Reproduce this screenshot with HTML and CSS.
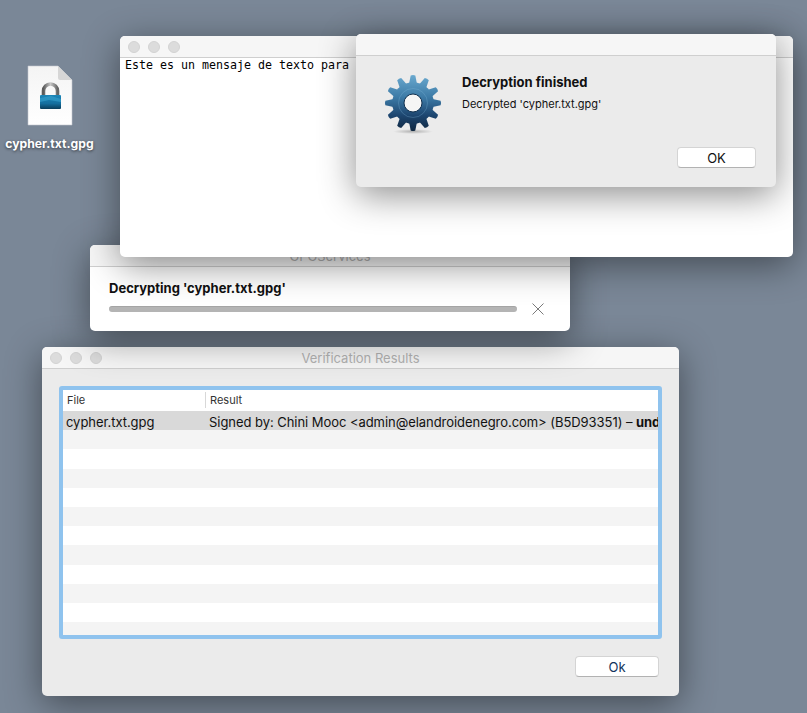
FILE: index.html
```html
<!DOCTYPE html>
<html lang="es">
<head>
    <meta charset="UTF-8">
    <title>Verification Results</title>
    <link rel="stylesheet" href="styles.css">
</head>
<body>
    <div class="desktop">
        <div class="file-icon">
            <svg class="doc" width="60" height="64" viewBox="0 0 60 64">
                <defs>
                    <linearGradient id="lockBody" x1="0" y1="0" x2="0" y2="1">
                        <stop offset="0" stop-color="#1c86b8"/>
                        <stop offset="0.6" stop-color="#146f9f"/>
                        <stop offset="1" stop-color="#0a3c5a"/>
                    </linearGradient>
                    <linearGradient id="shackle" x1="0" y1="0" x2="1" y2="0">
                        <stop offset="0" stop-color="#5c5c5c"/>
                        <stop offset="0.5" stop-color="#c8c8c8"/>
                        <stop offset="1" stop-color="#666"/>
                    </linearGradient>
                    <linearGradient id="docFill" x1="0" y1="0" x2="0" y2="1">
                        <stop offset="0" stop-color="#f4f4f4"/>
                        <stop offset="1" stop-color="#fff"/>
                    </linearGradient>
                </defs>
                <path d="M8 1H38L52 15V60H8Z" fill="url(#docFill)" stroke="#c4c8cd" stroke-width="0.6"/>
                <path d="M38 1L52 15H40Q38 15 38 13Z" fill="#d6d6d6"/>
                <path d="M23.5 31V26A7 7 0 0 1 37.5 26V31" fill="none" stroke="url(#shackle)" stroke-width="3.6"/>
                <rect x="20" y="30" width="21" height="14" rx="1" fill="url(#lockBody)"/>
                <path d="M20 33L31 31L41 34V37L29 35L20 37Z" fill="#3ba6d2" opacity="0.55"/>
            </svg>
            <span class="file-name">cypher.txt.gpg</span>
        </div>

        <div class="window text-window">
            <div class="titlebar">
                <span class="dot"></span><span class="dot"></span><span class="dot"></span>
            </div>
            <div class="text-body">Este es un mensaje de texto para</div>
        </div>

        <div class="window alert-window">
            <div class="titlebar"></div>
            <div class="alert-body">
                <svg class="gear" width="60" height="62" viewBox="-30 -30 60 62">
                    <defs>
                        <linearGradient id="gearFill" gradientUnits="userSpaceOnUse" x1="0" y1="-28" x2="0" y2="28">
                            <stop offset="0" stop-color="#6aa9cf"/>
                            <stop offset="0.4" stop-color="#3c7aa6"/>
                            <stop offset="0.72" stop-color="#1d4670"/>
                            <stop offset="1" stop-color="#0f2740"/>
                        </linearGradient>
                        <radialGradient id="gearShadow">
                            <stop offset="0" stop-color="#000" stop-opacity="0.25"/>
                            <stop offset="1" stop-color="#000" stop-opacity="0"/>
                        </radialGradient>
                        <path id="tooth" d="M-3.9 -19.5L-2.3 -27.6Q0 -28.6 2.3 -27.6L3.9 -19.5Z"/>
                        <mask id="gearMask" maskUnits="userSpaceOnUse" x="-30" y="-30" width="60" height="60">
                            <circle r="20.8" fill="#fff"/>
                            <g fill="#fff">
                                <use href="#tooth"/>
                                <use href="#tooth" transform="rotate(30)"/>
                                <use href="#tooth" transform="rotate(60)"/>
                                <use href="#tooth" transform="rotate(90)"/>
                                <use href="#tooth" transform="rotate(120)"/>
                                <use href="#tooth" transform="rotate(150)"/>
                                <use href="#tooth" transform="rotate(180)"/>
                                <use href="#tooth" transform="rotate(210)"/>
                                <use href="#tooth" transform="rotate(240)"/>
                                <use href="#tooth" transform="rotate(270)"/>
                                <use href="#tooth" transform="rotate(300)"/>
                                <use href="#tooth" transform="rotate(330)"/>
                            </g>
                            <circle r="8.5" fill="#000"/>
                        </mask>
                    </defs>
                    <ellipse cy="28.5" rx="20" ry="2.5" fill="url(#gearShadow)"/>
                    <rect x="-30" y="-30" width="60" height="60" fill="url(#gearFill)" mask="url(#gearMask)"/>
                    <circle r="14.5" fill="none" stroke="#86bfe0" stroke-width="0.5" opacity="0.55"/>
                    <circle r="9" fill="#f5f5f5" stroke="#12304d" stroke-width="1"/>
                </svg>
                <div class="alert-text">
                    <div class="alert-title">Decryption finished</div>
                    <div class="alert-msg">Decrypted 'cypher.txt.gpg'</div>
                </div>
            </div>
            <div class="alert-actions">
                <button class="mac-btn alert-btn">OK</button>
            </div>
        </div>

        <div class="window progress-window">
            <div class="titlebar">
                <span class="title">GPGServices</span>
            </div>
            <div class="progress-body">
                <div class="progress-label">Decrypting 'cypher.txt.gpg'</div>
                <div class="progress-row">
                    <div class="progress-bar"></div>
                    <svg width="12" height="12" viewBox="0 0 12 12">
                        <path d="M0.5 0.5L11.5 11.5M11.5 0.5L0.5 11.5" stroke="#7a7a7a" stroke-width="1" fill="none"/>
                    </svg>
                </div>
            </div>
        </div>

        <div class="window results-window">
            <div class="titlebar">
                <span class="dot"></span><span class="dot"></span><span class="dot"></span>
                <span class="title">Verification Results</span>
            </div>
            <div class="results-body">
                <div class="table-frame">
                    <div class="table-head">
                        <div class="col-file">File</div>
                        <div class="col-result">Result</div>
                    </div>
                    <div class="table-rows">
                        <div class="row row-selected">
                            <div class="cell-file">cypher.txt.gpg</div>
                            <div class="cell-result">Signed by: Chini Mooc &lt;admin@elandroidenegro.com&gt; (B5D93351) – <b>und</b></div>
                        </div>
                        <div class="row row-alt"></div>
                        <div class="row"></div>
                        <div class="row row-alt"></div>
                        <div class="row"></div>
                        <div class="row row-alt"></div>
                        <div class="row"></div>
                        <div class="row row-alt"></div>
                        <div class="row"></div>
                        <div class="row row-alt"></div>
                        <div class="row"></div>
                        <div class="row row-alt"></div>
                    </div>
                </div>
                <div class="results-actions">
                    <button class="mac-btn results-btn">Ok</button>
                </div>
            </div>
        </div>
    </div>
</body>
</html>
```

FILE: styles.css
```css
* {
    box-sizing: border-box;
}
html, body {
    margin: 0;
    padding: 0;
}
body {
    font-family: Inter, "Liberation Sans", sans-serif;
    font-size: 13px;
    color: #111;
}
.desktop {
    position: relative;
    width: 807px;
    height: 713px;
    overflow: hidden;
    background-color: #7a8797;
}

/* desktop file */
.file-icon {
    position: absolute;
    left: 0;
    top: 65px;
    width: 99px;
    display: flex;
    flex-direction: column;
    align-items: center;
}
.doc {
    display: block;
}
.file-name {
    margin-top: 7px;
    font-weight: 700;
    font-size: 12.2px;
    line-height: 16px;
    color: #fff;
    white-space: nowrap;
    text-shadow: 0 1px 3px rgba(0,0,0,0.6);
}

/* windows */
.window {
    position: absolute;
    border-radius: 5px;
    overflow: hidden;
    background-color: #fff;
    box-shadow: 0 8px 36px rgba(0,0,0,0.45);
}
.titlebar {
    position: relative;
    display: flex;
    align-items: center;
    gap: 8px;
    height: 22px;
    padding-left: 8px;
    background-color: #f6f6f6;
    border-bottom: 1px solid #cfcfcf;
}
.dot {
    width: 12px;
    height: 12px;
    border-radius: 50%;
    background-color: #dcdcdc;
    border: 1px solid #d2d2d2;
}
.title {
    position: absolute;
    left: 0;
    right: 0;
    text-align: center;
    color: #b2b2b2;
    font-size: 13px;
}
.text-window {
    left: 120px;
    top: 36px;
    width: 673px;
    height: 221px;
    z-index: 2;
}
.text-body {
    padding: 0 5px;
    font-family: "DejaVu Sans Mono", "Liberation Mono", monospace;
    font-size: 11.63px;
    line-height: 14px;
    color: #000;
}
.alert-window {
    left: 356px;
    top: 34px;
    width: 420px;
    height: 153px;
    z-index: 3;
    background-color: #ebebeb;
}
.alert-body {
    display: flex;
    padding: 17px 0 0 27px;
    height: 88px;
}
.alert-text {
    margin-left: 19px;
    padding-top: 1px;
}
.alert-title {
    font-weight: 700;
    font-size: 13px;
    line-height: 16px;
}
.alert-msg {
    margin-top: 7px;
    font-size: 11px;
    line-height: 14px;
}
.alert-actions {
    display: flex;
    justify-content: flex-end;
    padding-right: 20px;
    margin-top: 3px;
}
.mac-btn {
    font-family: inherit;
    font-size: 13px;
    color: #111;
    padding: 0;
    background-color: #fff;
    border: 1px solid #d4d4d4;
    border-bottom-color: #b2b2b2;
    border-radius: 4px;
}
.alert-btn {
    width: 79px;
    height: 21px;
}
.progress-window {
    left: 90px;
    top: 245px;
    width: 480px;
    height: 86px;
    z-index: 1;
}
.progress-body {
    padding: 13px 19px 0;
}
.progress-label {
    font-weight: 700;
    font-size: 13px;
    line-height: 16px;
}
.progress-row {
    display: flex;
    align-items: center;
    gap: 15px;
    margin-top: 7px;
}
.progress-bar {
    width: 408px;
    height: 6px;
    border-radius: 3px;
    background-color: #b4b4b4;
    border-top: 1px solid #a4a4a4;
}
.results-window {
    left: 42px;
    top: 347px;
    width: 637px;
    height: 349px;
    background-color: #ebebeb;
}
.results-body {
    padding: 17px 17px 0;
}
.table-frame {
    width: 603px;
    height: 253px;
    border: 4px solid #8fc3ee;
    border-radius: 3px;
    background-color: #fff;
    overflow: hidden;
}
.table-head {
    display: flex;
    height: 21px;
    padding-bottom: 2px;
    align-items: center;
    font-size: 11px;
    color: #333;
    background-color: #fff;
}
.col-file {
    width: 143px;
    padding-left: 4px;
    height: 16px;
    line-height: 16px;
    border-right: 1px solid #d8d8d8;
}
.col-result {
    padding-left: 4px;
    line-height: 16px;
}
.table-rows {
    display: grid;
    grid-auto-rows: 19.2px;
}
.row {
    display: flex;
    align-items: center;
    white-space: nowrap;
    overflow: hidden;
    background-color: #fff;
}
.row-alt {
    background-color: #f4f4f4;
}
.row-selected {
    padding-top: 3px;
    background-color: #d9d9d9;
}
.cell-file {
    flex: none;
    width: 143px;
    padding-left: 3px;
    letter-spacing: -0.05px;
}
.cell-result {
    padding-left: 3px;
    letter-spacing: -0.05px;
}
.results-actions {
    display: flex;
    justify-content: flex-end;
    padding-right: 3px;
    margin-top: 17px;
}
.results-btn {
    width: 84px;
    height: 21px;
    color: #12345c;
}
```
